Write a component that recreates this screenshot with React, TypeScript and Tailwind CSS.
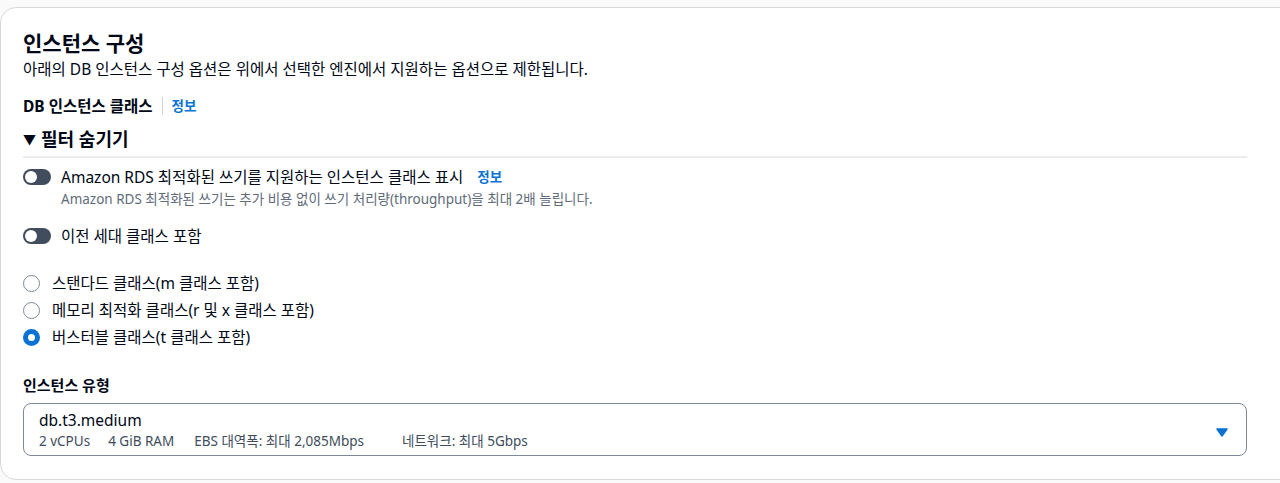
import React from 'react';

const font = { fontFamily: '"Noto Sans", "Noto Sans CJK KR", sans-serif' };

function Toggle() {
  return (
    <span className="relative inline-block h-[16px] w-[28px] shrink-0 rounded-full bg-[#414d5c]">
      <span className="absolute left-[2px] top-[2px] h-[12px] w-[12px] rounded-full bg-white" />
    </span>
  );
}

function Radio({ checked }: { checked?: boolean }) {
  return checked ? (
    <span className="inline-block h-[17px] w-[17px] shrink-0 rounded-full border-[5px] border-[#0972d3] bg-white" />
  ) : (
    <span className="inline-block h-[17px] w-[17px] shrink-0 rounded-full border border-[#7d8998] bg-white" />
  );
}

const classes = [
  { label: '스탠다드 클래스(m 클래스 포함)', checked: false },
  { label: '메모리 최적화 클래스(r 및 x 클래스 포함)', checked: false },
  { label: '버스터블 클래스(t 클래스 포함)', checked: true },
];

export default function App() {
  return (
    <div className="min-h-[483px] bg-[#fafafa] pt-[7px]" style={font}>
      <div className="-mr-4 rounded-[16px] border border-[#d5dbdb] bg-white pl-[22px] pr-[48px] pt-[22px] pb-[23px] text-[#000716]">
        {/* Header */}
        <h2 className="text-[21px] font-bold leading-[26px]">인스턴스 구성</h2>
        <p className="mt-[2px] text-[15.5px] leading-[22px]">
          아래의 DB 인스턴스 구성 옵션은 위에서 선택한 엔진에서 지원하는 옵션으로 제한됩니다.
        </p>

        <div className="mt-[16px] flex items-center text-[15.5px] leading-[20px]">
          <span className="font-bold">DB 인스턴스 클래스</span>
          <span className="mx-[9px] h-[18px] w-px bg-[#d1d5db]" />
          <span className="text-[13.5px] font-bold text-[#0972d3]">정보</span>
        </div>

        {/* Filter section */}
        <div className="mt-[11px] flex items-center gap-[5px] text-[18px] font-bold leading-[24px]">
          <span className="text-[13px]">▼</span>
          <span>필터 숨기기</span>
        </div>
        <div className="mt-[5px] h-[2px] bg-[#e9ebed]" />

        <div className="mt-[8px] flex items-center gap-[10px] leading-[22px]">
          <Toggle />
          <span className="text-[15.5px]">Amazon RDS 최적화된 쓰기를 지원하는 인스턴스 클래스 표시</span>
          <span className="ml-[4px] text-[13.5px] font-bold text-[#0972d3]">정보</span>
        </div>
        <p className="mt-[1px] ml-[38px] text-[13.5px] leading-[20px] text-[#5f6b7a]">
          Amazon RDS 최적화된 쓰기는 추가 비용 없이 쓰기 처리량(throughput)을 최대 2배 늘립니다.
        </p>

        <div className="mt-[16px] flex items-center gap-[10px] leading-[22px]">
          <Toggle />
          <span className="text-[15.5px]">이전 세대 클래스 포함</span>
        </div>

        <div className="mt-[25px] flex flex-col gap-[5px]">
          {classes.map((c) => (
            <label key={c.label} className="flex items-center gap-[12px] text-[15.5px] leading-[22px]">
              <Radio checked={c.checked} />
              <span>{c.label}</span>
            </label>
          ))}
        </div>

        {/* Instance type */}
        <div className="mt-[27px] text-[15px] font-bold leading-[20px]">인스턴스 유형</div>
        <div className="mt-[8px] flex items-center rounded-[8px] border border-[#7d8998] pl-[15px] pr-[18px] pt-[5px] pb-[4px]">
          <div className="flex-1">
            <div className="text-[15.5px] leading-[22px]">db.t3.medium</div>
            <div className="flex text-[13.5px] leading-[20px] text-[#414d5c]">
              <span>2 vCPUs</span>
              <span className="ml-[18px]">4 GiB RAM</span>
              <span className="ml-[20px]">EBS 대역폭: 최대 2,085Mbps</span>
              <span className="ml-[38px]">네트워크: 최대 5Gbps</span>
            </div>
          </div>
          <svg width="12" height="9" viewBox="0 0 12 9" className="mt-[4px]">
            <path d="M1 1h10L6 8z" fill="#0972d3" stroke="#0972d3" strokeWidth="1.5" strokeLinejoin="round" />
          </svg>
        </div>
      </div>
    </div>
  );
}
